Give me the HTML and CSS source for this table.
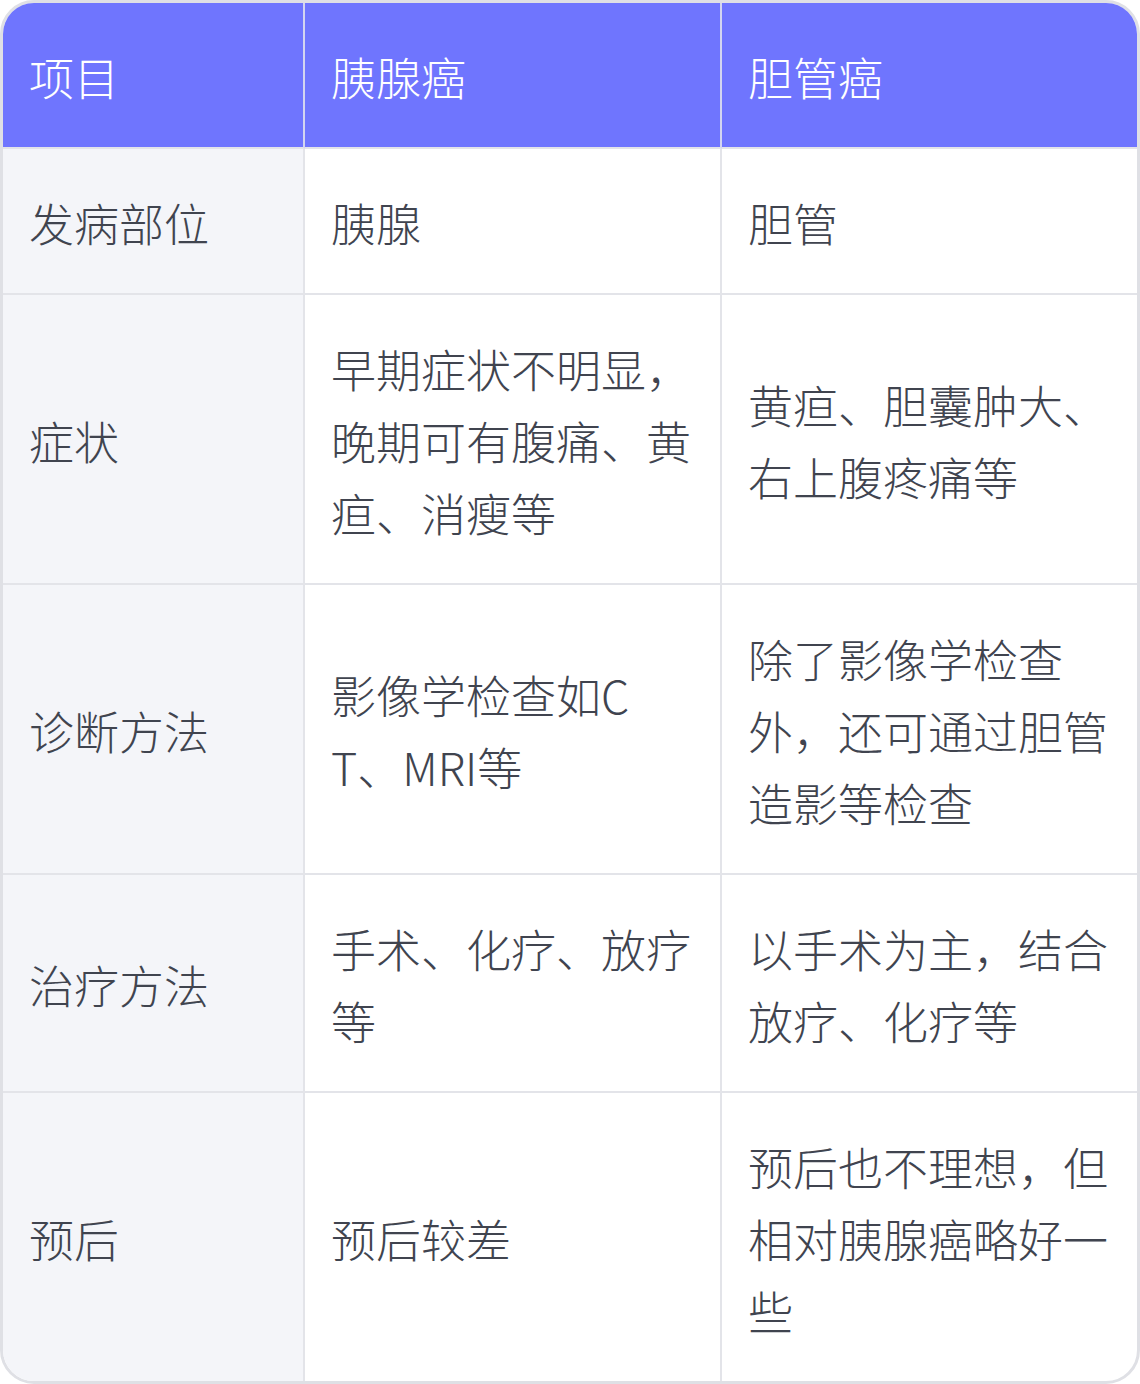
FILE: index.html
```html
<!DOCTYPE html>
<html lang="zh-CN">
<head>
<meta charset="utf-8">
<title>胰腺癌与胆管癌对比</title>
<link rel="stylesheet" href="styles.css">
</head>
<body>
<div class="wrap">
  <table class="cmp">
    <colgroup>
      <col class="c1">
      <col class="c2">
      <col class="c3">
    </colgroup>
    <thead>
      <tr><th>项目</th><th>胰腺癌</th><th>胆管癌</th></tr>
    </thead>
    <tbody>
      <tr><td class="k">发病部位</td><td>胰腺</td><td>胆管</td></tr>
      <tr><td class="k">症状</td><td>早期症状不明显，晚期可有腹痛、黄疸、消瘦等</td><td>黄疸、胆囊肿大、右上腹疼痛等</td></tr>
      <tr><td class="k">诊断方法</td><td>影像学检查如CT、MRI等</td><td>除了影像学检查外，还可通过胆管造影等检查</td></tr>
      <tr><td class="k">治疗方法</td><td>手术、化疗、放疗等</td><td>以手术为主，结合放疗、化疗等</td></tr>
      <tr><td class="k">预后</td><td>预后较差</td><td>预后也不理想，但相对胰腺癌略好一些</td></tr>
    </tbody>
  </table>
</div>
</body>
</html>
```

FILE: styles.css
```css
html, body {
  margin: 0;
  padding: 0;
  background: #ffffff;
}
.wrap {
  width: 1140px;
  height: 1384px;
  box-sizing: border-box;
  border: 3px solid #dfe0e5;
  border-radius: 34px;
  overflow: hidden;
  background: #ffffff;
}
.cmp {
  width: 100%;
  table-layout: fixed;
  border-collapse: separate;
  border-spacing: 0;
  font-family: "Noto Sans CJK SC", "Noto Sans", sans-serif;
  font-weight: 300;
  font-size: 45px;
  line-height: 72px;
  color: #40444f;
}
.c1 { width: 302px; }
.c2 { width: 417px; }
.c3 { width: 415px; }
.cmp th,
.cmp td {
  padding: 38px 28px 34px 26px;
  text-align: left;
  vertical-align: middle;
  word-break: break-all;
  border-right: 2px solid #e3e4e9;
  border-bottom: 2px solid #e3e4e9;
}
.cmp th:last-child,
.cmp td:last-child {
  border-right: none;
}
.cmp tbody tr:last-child td {
  border-bottom: none;
}
.cmp th {
  background: #6f75fe;
  color: #ffffff;
  font-weight: 300;
  border-right-color: #d3d5f0;
  border-bottom-color: #e3e4e9;
}
.cmp td.k {
  background: #f4f5f9;
}
```
